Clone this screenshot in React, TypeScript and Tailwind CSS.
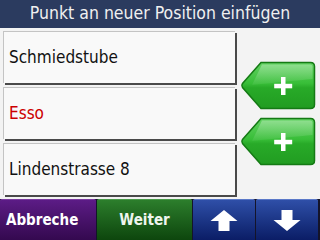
import React from "react";

function GreenAdd() {
  return (
    <svg width="76" height="49" viewBox="0 0 76 49">
      <defs>
        <linearGradient id="gg" x1="0" y1="0" x2="0" y2="1">
          <stop offset="0" stopColor="#62d262" />
          <stop offset="0.45" stopColor="#38be38" />
          <stop offset="0.55" stopColor="#28aa28" />
          <stop offset="1" stopColor="#219c21" />
        </linearGradient>
        <linearGradient id="gh" x1="0" y1="0" x2="0" y2="1">
          <stop offset="0" stopColor="#ffffff" stopOpacity="0.3" />
          <stop offset="1" stopColor="#ffffff" stopOpacity="0.05" />
        </linearGradient>
      </defs>
      <path
        d="M21 1.5 H70.5 Q74.5 1.5 74.5 5.5 V43.5 Q74.5 47.5 70.5 47.5 H21 L2.5 26.5 Q1 24.5 2.5 22.5 Z"
        fill="url(#gg)"
        stroke="#147a14"
        strokeWidth="1.5"
      />
      <path
        d="M22 3.5 H70 Q72.5 3.5 72.5 6 V18 Q50 20 12 24 L22 3.5 Z"
        fill="url(#gh)"
      />
      <rect x="41" y="16" width="4.5" height="18" fill="#ffffff" />
      <rect x="34.2" y="22.8" width="18" height="4.5" fill="#ffffff" />
    </svg>
  );
}

function Arrow({ down }: { down?: boolean }) {
  return (
    <svg width="28" height="21" viewBox="0 0 28 21" style={down ? { transform: "rotate(180deg)" } : undefined}>
      <path d="M14 0 L27.5 11 H19.5 V21 H8.5 V11 H0.5 Z" fill="#ffffff" />
    </svg>
  );
}

function Item({ label, red }: { label: string; red?: boolean }) {
  return (
    <div className="h-[52px] w-[232px] flex items-center pl-[5px] bg-[#f9f9f9] border-t border-l border-[#c4c4c4] shadow-[2px_2px_0_#4a4a4a] mr-[2px]">
      <span className={"text-[17px] leading-none font-['DejaVu_Sans_Condensed','DejaVu_Sans',sans-serif] " + (red ? "text-[#cc0000]" : "text-[#111111]")}>
        {label}
      </span>
    </div>
  );
}

export default function App() {
  return (
    <div className="w-[320px] h-[240px] overflow-hidden flex flex-col bg-[#f3f3f3] font-['DejaVu_Sans_Condensed','DejaVu_Sans',sans-serif]">
      <div className="h-[28px] shrink-0 bg-[#2b3b5f] flex items-center justify-center">
        <span className="text-[17.5px] leading-none text-[#f0f0f0] pb-[1px]">Punkt an neuer Position einfügen</span>
      </div>
      <div className="flex-1 flex">
        <div className="flex flex-col gap-[4px] pt-[3px] pl-[3px]">
          <Item label="Schmiedstube" />
          <Item label="Esso" red />
          <Item label="Lindenstrasse 8" />
        </div>
        <div className="flex flex-col gap-[7px] pt-[33px] pl-[3px]">
          <GreenAdd />
          <GreenAdd />
        </div>
      </div>
      <div className="h-[41px] shrink-0 flex gap-[1px] bg-[#14142a] pr-[2px]">
        <div className="w-[96px] flex items-center justify-start pl-[6px] rounded-t-[2px] bg-gradient-to-b from-[#5c1c86] to-[#34094f] border-t border-[#7a3aa0]">
          <span className="text-[15px] font-bold text-white leading-none">Abbreche</span>
        </div>
        <div className="w-[95px] flex items-center justify-center rounded-t-[2px] bg-gradient-to-b from-[#2c7e2c] to-[#0d460d] border-t border-[#4a9a4a]">
          <span className="text-[15px] font-bold text-[#eef5ee] leading-none">Weiter</span>
        </div>
        <div className="w-[62px] flex items-center justify-center rounded-t-[2px] bg-gradient-to-b from-[#2f4fa8] to-[#0b1d66] border-t border-[#5a78c8]">
          <Arrow />
        </div>
        <div className="w-[62px] flex items-center justify-center rounded-t-[2px] bg-gradient-to-b from-[#2f4fa8] to-[#0b1d66] border-t border-[#5a78c8]">
          <Arrow down />
        </div>
      </div>
    </div>
  );
}
